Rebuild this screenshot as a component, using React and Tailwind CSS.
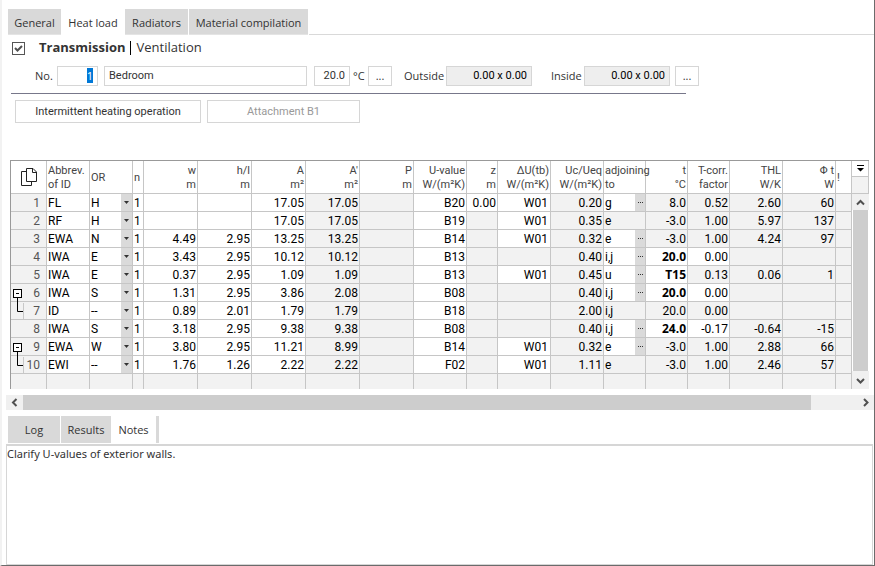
import { useEffect, useRef, useState } from "react";

const roboto = "font-['Roboto','Liberation_Sans',sans-serif]";

const columns = [
  { key: "abbrev", lines: ["Abbrev.", "of ID"], width: "w-[43px]", align: "text-left" },
  { key: "or", lines: ["OR"], width: "w-[43px]", align: "text-left" },
  { key: "n", lines: ["n"], width: "w-[11px]", align: "text-left" },
  { key: "w", lines: ["w", "m"], width: "w-[54px]", align: "text-right" },
  { key: "h", lines: ["h/l", "m"], width: "w-[54px]", align: "text-right" },
  { key: "a", lines: ["A", "m²"], width: "w-[54px]", align: "text-right" },
  { key: "a2", lines: ["A'", "m²"], width: "w-[54px]", align: "text-right" },
  { key: "p", lines: ["P", "m"], width: "w-[54px]", align: "text-right" },
  { key: "u", lines: ["U-value", "W/(m²K)"], width: "w-[53px]", align: "text-right" },
  { key: "z", lines: ["z", "m"], width: "w-[31px]", align: "text-right" },
  { key: "du", lines: ["ΔU(tb)", "W/(m²K)"], width: "w-[53px]", align: "text-right" },
  { key: "uc", lines: ["Uc/Ueq", "W/(m²K)"], width: "w-[53px]", align: "text-right" },
  { key: "adj", lines: ["adjoining", "to"], width: "w-[42px]", align: "text-left" },
  { key: "t", lines: ["t", "°C"], width: "w-[42px]", align: "text-right" },
  { key: "corr", lines: ["T-corr.", "factor"], width: "w-[42px]", align: "text-right" },
  { key: "thl", lines: ["THL", "W/K"], width: "w-[53px]", align: "text-right" },
  { key: "phi", lines: ["Φ t", "W"], width: "w-[53px]", align: "text-right" },
  { key: "info", lines: ["!"], width: "w-[16px]", align: "text-left" },
];

const rows = [
  { abbrev: "FL", or: "H", w: "", h: "", a: "17.05", a2: "17.05", u: "B20", z: "0.00", du: "W01", uc: "0.20", adj: "g", pick: true, t: "8.0", corr: "0.52", thl: "2.60", phi: "60" },
  { abbrev: "RF", or: "H", w: "", h: "", a: "17.05", a2: "17.05", u: "B19", du: "W01", uc: "0.35", adj: "e", t: "-3.0", corr: "1.00", thl: "5.97", phi: "137" },
  { abbrev: "EWA", or: "N", w: "4.49", h: "2.95", a: "13.25", a2: "13.25", u: "B14", du: "W01", uc: "0.32", adj: "e", pick: true, t: "-3.0", corr: "1.00", thl: "4.24", phi: "97" },
  { abbrev: "IWA", or: "E", w: "3.43", h: "2.95", a: "10.12", a2: "10.12", u: "B13", uc: "0.40", adj: "i,j", pick: true, t: "20.0", own: true, corr: "0.00", corrEdit: true },
  { abbrev: "IWA", or: "E", w: "0.37", h: "2.95", a: "1.09", a2: "1.09", u: "B13", du: "W01", uc: "0.45", adj: "u", pick: true, t: "T15", own: true, corr: "0.13", thl: "0.06", phi: "1" },
  { abbrev: "IWA", or: "S", w: "1.31", h: "2.95", a: "3.86", a2: "2.08", u: "B08", uc: "0.40", adj: "i,j", pick: true, t: "20.0", own: true, corr: "0.00", corrEdit: true, tree: "parent" },
  { abbrev: "ID", or: "--", w: "0.89", h: "2.01", a: "1.79", a2: "1.79", u: "B18", uc: "2.00", adj: "i,j", t: "20.0", corr: "0.00", tree: "child" },
  { abbrev: "IWA", or: "S", w: "3.18", h: "2.95", a: "9.38", a2: "9.38", u: "B08", uc: "0.40", adj: "i,j", pick: true, t: "24.0", own: true, corr: "-0.17", corrEdit: true, thl: "-0.64", phi: "-15" },
  { abbrev: "EWA", or: "W", w: "3.80", h: "2.95", a: "11.21", a2: "8.99", u: "B14", du: "W01", uc: "0.32", adj: "e", pick: true, t: "-3.0", corr: "1.00", thl: "2.88", phi: "66", tree: "parent" },
  { abbrev: "EWI", or: "--", w: "1.76", h: "1.26", a: "2.22", a2: "2.22", u: "F02", du: "W01", uc: "1.11", adj: "e", t: "-3.0", corr: "1.00", thl: "2.46", phi: "57", tree: "child" },
];

const editable = ["abbrev", "or", "n", "w", "h", "a", "u"];

function isWhite(row, key) {
  if (editable.includes(key)) return true;
  if (key === "z" || key === "du") return Boolean(row[key]);
  if (key === "adj") return Boolean(row.pick);
  if (key === "t") return Boolean(row.own);
  if (key === "corr") return Boolean(row.corrEdit);
  return false;
}

function Chevron({ d }) {
  return (
    <svg width="9" height="9" viewBox="0 0 9 9" fill="none" stroke="#505050" strokeWidth="2">
      <path d={d} />
    </svg>
  );
}

function TreeMark({ kind }) {
  return (
    <svg width="12" height="18" viewBox="0 0 12 18" fill="none" stroke="#000" className="shrink-0 overflow-visible">
      {kind === "parent" ? (
        <>
          <rect x="2.5" y="5.5" width="8" height="8" fill="#fff" />
          <path d="M5 9.5h3M6.5 14v4" />
        </>
      ) : (
        <>
          <path d="M6.5 0v9.5H12" />
          <path d="M12.5 1v16" stroke="#c8c8c8" />
        </>
      )}
    </svg>
  );
}

function OrientationSelect({ value, label }) {
  const options = ["H", "N", "E", "S", "W", "--"];
  return (
    <div className="relative h-[17px]">
      <select
        aria-label={label}
        defaultValue={value}
        className="h-[17px] w-full appearance-none bg-transparent pt-px pl-px leading-4 outline-none"
      >
        {options.map((o) => (
          <option key={o}>{o}</option>
        ))}
      </select>
      <span className="pointer-events-none absolute inset-y-0 right-0 flex w-[11px] items-center justify-center bg-[#dadada]">
        <svg width="5" height="3" viewBox="0 0 5 3" fill="#333">
          <path d="M0 0h5L2.5 3z" />
        </svg>
      </span>
    </div>
  );
}

function Cell({ row, col, index }) {
  const bg = isWhite(row, col.key) ? "bg-white" : "bg-[#f2f2f2]";
  const base = `h-[18px] overflow-hidden whitespace-nowrap border-r border-b border-[#c6c6c6] leading-4 ${col.align} ${bg}`;

  if (col.key === "or") {
    return (
      <td className={`${base} p-0`}>
        <OrientationSelect value={row.or} label={`Orientation, row ${index + 1}`} />
      </td>
    );
  }
  if (col.key === "adj") {
    return (
      <td className={`${base} p-0`}>
        <div className="flex h-[17px] justify-between">
          <span className="pt-px pl-px">{row.adj}</span>
          {row.pick && (
            <button
              type="button"
              aria-label={`Choose adjoining, row ${index + 1}`}
              className="flex w-[10px] items-center justify-center bg-[#dadada]"
            >
              <svg width="5" height="1" viewBox="0 0 5 1" fill="#333">
                <path d="M0 0h1v1H0zM2 0h1v1H2zM4 0h1v1H4z" />
              </svg>
            </button>
          )}
        </div>
      </td>
    );
  }
  if (col.key === "t" && row.own) {
    return (
      <td className={`${base} py-0 pr-px pl-0 font-['Open_Sans',sans-serif] text-xs leading-4 font-bold`}>
        {row.t}
      </td>
    );
  }
  const pad = col.key === "du" ? "pr-0.5" : "px-px";
  return <td className={`${base} pt-px pb-0 ${pad}`}>{col.key === "n" ? "1" : row[col.key]}</td>;
}

function HeatTable() {
  return (
    <table className={`w-full table-fixed border-separate border-spacing-0 text-xs text-black ${roboto}`}>
      <colgroup>
        <col className="w-[36px]" />
        {columns.map((c) => (
          <col key={c.key} className={c.width} />
        ))}
      </colgroup>
      <thead>
        <tr>
          <th className="h-[33px] border-r border-b border-[#c6c6c6] p-0">
            <button type="button" aria-label="Copy" className="flex w-full justify-center">
              <svg width="16" height="18" viewBox="0 0 16 18" fill="none" stroke="#222">
                <path d="M5.5 3.5h-5v14h10v-4" />
                <path d="M5.5.5h6.500l3.500 3.500v9.500h-10z" />
                <path d="M11.500.5v4h4" />
              </svg>
            </button>
          </th>
          {columns.map((c) => (
            <th
              key={c.key}
              className={`h-[33px] whitespace-nowrap border-r border-b border-[#c6c6c6] px-px pt-0.5 pb-0 text-[11px] leading-[14px] font-normal text-[#444] ${c.align}`}
            >
              {c.lines.map((line) => (
                <span key={line} className="block">
                  {line}
                </span>
              ))}
            </th>
          ))}
        </tr>
      </thead>
      <tbody>
        {rows.map((row, i) => (
          <tr key={i}>
            <th className="h-[18px] border-r border-b border-[#c6c6c6] bg-[#f2f2f2] p-0 font-normal text-[#555]">
              <div className="flex h-[17px] justify-between pr-1.5 leading-4">
                {row.tree ? <TreeMark kind={row.tree} /> : <span />}
                <span className="pt-px">{i + 1}</span>
              </div>
            </th>
            {columns.map((c) => (
              <Cell key={c.key} row={row} col={c} index={i} />
            ))}
          </tr>
        ))}
        <tr>
          <td className="h-[15px] border-r border-[#c6c6c6] bg-[#f2f2f2] p-0" />
          {columns.map((c) => (
            <td key={c.key} className="h-[15px] border-r border-[#c6c6c6] bg-[#f2f2f2] p-0" />
          ))}
        </tr>
      </tbody>
    </table>
  );
}

const topTabs = [
  { name: "General", width: "w-[53px]" },
  { name: "Heat load", width: "w-[62px]" },
  { name: "Radiators", width: "w-[63px]" },
  { name: "Material compilation", width: "w-[119px]" },
];

const bottomTabs = [
  { name: "Log", width: "w-[52px]" },
  { name: "Results", width: "w-[50px]" },
  { name: "Notes", width: "w-[43px]" },
];

const field = "h-5 border border-[#d6d6d6] bg-white px-1 outline-none";
const sizeField = `h-5 w-[86px] border border-[#d6d6d6] bg-[#eee] px-1 pb-0.5 text-right text-black outline-none ${roboto}`;

export default function App() {
  const [tab, setTab] = useState("Heat load");
  const [lower, setLower] = useState("Notes");
  const numberRef = useRef(null);

  // The room number is ready to be typed over
  useEffect(() => {
    numberRef.current?.focus();
    numberRef.current?.select();
  }, []);

  return (
    <div className="flex min-h-screen flex-col border-r border-b border-l-2 border-r-[#6b6b6b] border-b-[#6b6b6b] border-l-[#f2f2f2] bg-white pl-1 font-['Open_Sans','Noto_Sans',sans-serif] text-[11px] text-[#333]">
      <div role="tablist" className="flex gap-px pt-[9px] pl-0.5">
        {topTabs.map((t) => (
          <button
            key={t.name}
            type="button"
            role="tab"
            aria-selected={tab === t.name}
            onClick={() => setTab(t.name)}
            className={`h-[26px] whitespace-nowrap ${t.width} ${
              tab === t.name ? "bg-white pt-[3px]" : "border-b border-[#e4e4e4] bg-[#d9d9d9] pt-1"
            }`}
          >
            {t.name}
          </button>
        ))}
        <div className="flex-1 border-b border-[#d9d9d9]" />
      </div>

      <div className="flex h-[26px] items-center pl-1.5">
        <label className="relative flex">
          <input
            type="checkbox"
            defaultChecked
            aria-label="Transmission active"
            className="peer size-[13px] appearance-none border border-[#555] bg-white"
          />
          <svg
            width="13"
            height="13"
            viewBox="0 0 13 13"
            fill="none"
            stroke="#505050"
            strokeWidth="2"
            className="pointer-events-none absolute inset-0 hidden peer-checked:block"
          >
            <path d="M3 6l2.500 2.500L10 4" />
          </svg>
        </label>
        <button type="button" className="ml-3.5 text-[13px] font-bold">
          Transmission
        </button>
        <span className="mx-1 mr-1.5 h-3.5 w-px bg-black" />
        <button type="button" className="text-[13px]">
          Ventilation
        </button>
      </div>

      <div className="mt-[5px] flex items-center pl-[29px]">
        <label htmlFor="room-no" className="w-[22px]">
          No.
        </label>
        <input
          id="room-no"
          ref={numberRef}
          defaultValue="1"
          className={`${field} w-[41px] pb-0.5 text-right selection:bg-[#0078d7] selection:text-white`}
        />
        <input aria-label="Room name" defaultValue="Bedroom" className={`${field} ml-1.5 w-[203px] pb-0.5 ${roboto}`} />
        <input
          id="room-temp"
          defaultValue="20.0"
          className={`${field} ml-[7px] w-[36px] pb-0.5 text-right ${roboto}`}
        />
        <label htmlFor="room-temp" className="ml-[3px] w-[15px]">
          °C
        </label>
        <button type="button" aria-label="Choose temperature" className={`${field} w-6`}>
          ...
        </button>
        <label htmlFor="outside" className="ml-3 w-[42px]">
          Outside
        </label>
        <input id="outside" readOnly defaultValue="0.00 x 0.00" className={sizeField} />
        <label htmlFor="inside" className="ml-[19px] w-[33px]">
          Inside
        </label>
        <input id="inside" readOnly defaultValue="0.00 x 0.00" className={sizeField} />
        <button type="button" aria-label="Choose size" className={`${field} ml-[5px] w-6`}>
          ...
        </button>
      </div>
      <div className="mt-[7px] ml-[5px] h-px w-7/9 bg-[#77778a]" />

      <div className={`mt-1.5 flex gap-1.5 pl-[9px] ${roboto}`}>
        <button type="button" className="h-[23px] w-[186px] border border-[#d6d6d6] bg-white pt-0.5">
          Intermittent heating operation
        </button>
        <button type="button" disabled className="h-[23px] w-[153px] border border-[#d6d6d6] bg-white pt-0.5 text-[#999]">
          Attachment B1
        </button>
      </div>

      <div className="mt-[37px] mr-[5px] ml-1 flex border-t border-l border-[#999]">
        <div className="min-w-0 flex-1">
          <HeatTable />
        </div>
        <div className="flex w-[17px] flex-col">
          <button
            type="button"
            aria-label="Column options"
            className="flex h-4 items-center justify-center border-r border-b border-[#c6c6c6]"
          >
            <svg width="7" height="7" viewBox="0 0 7 7" fill="#000">
              <path d="M0 0h7v1H0zM0 3h7L3.500 6.500z" />
            </svg>
          </button>
          <div className="h-[17px] border-r border-b border-[#c6c6c6] bg-[#f2f2f2]" />
          <button type="button" aria-label="Scroll up" className="flex h-4 items-center justify-center bg-[#f0f0f0]">
            <Chevron d="M1 6.500L4.500 3L8 6.500" />
          </button>
          <div className="mx-px flex-1 bg-[#cdcdcd]" />
          <button
            type="button"
            aria-label="Scroll down"
            className="flex h-[18px] items-center justify-center bg-[#f0f0f0]"
          >
            <Chevron d="M1 3L4.500 6.500L8 3" />
          </button>
        </div>
      </div>

      <div className="mt-1.5 flex h-[15px] bg-[#f0f0f0]">
        <button type="button" aria-label="Scroll left" className="flex w-[17px] items-center justify-center">
          <Chevron d="M6.500 1L3 4.500L6.500 8" />
        </button>
        <div className="flex-1">
          <div className="h-full w-[94.5%] bg-[#cdcdcd]" />
        </div>
        <button type="button" aria-label="Scroll right" className="flex w-[17px] items-center justify-center">
          <Chevron d="M3 1L6.500 4.500L3 8" />
        </button>
      </div>

      <div role="tablist" className="mt-1.5 flex gap-px pl-0.5">
        {bottomTabs.map((t) => (
          <button
            key={t.name}
            type="button"
            role="tab"
            aria-selected={lower === t.name}
            onClick={() => setLower(t.name)}
            className={`h-[27px] pt-0.5 ${t.width} ${lower === t.name ? "bg-white" : "bg-[#d9d9d9]"}`}
          >
            {t.name}
          </button>
        ))}
        <div className="h-[27px] w-[3px] bg-[#d9d9d9]" />
      </div>

      <textarea
        aria-label="Notes"
        defaultValue="Clarify U-values of exterior walls."
        className="mt-px mr-px flex-1 resize-none border border-t-2 border-[#d6d6d6] bg-white font-['Noto_Sans','Open_Sans',sans-serif] leading-4 outline-none"
      />
    </div>
  );
}
